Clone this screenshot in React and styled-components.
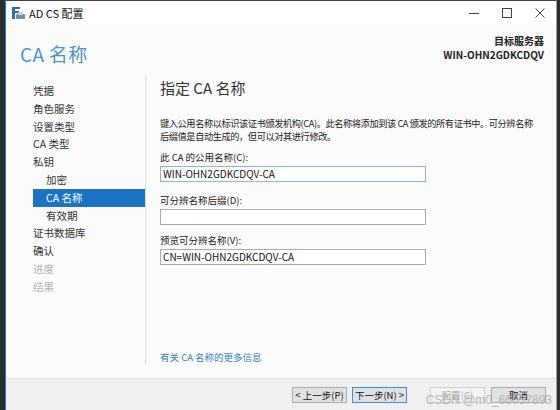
import React from "react";
import styled, { createGlobalStyle } from "styled-components";

const GlobalStyle = createGlobalStyle`
  html, body {
    margin: 0;
    padding: 0;
    background: #2d2d2d;
    font-family: "Noto Sans CJK SC", "Noto Sans", sans-serif;
  }
`;

const Screen = styled.div`
  width: 560px;
  height: 410px;
  display: flex;
  overflow: hidden;
  background: #2d2d2d;
`;

const LeftStrip = styled.div`
  width: 5px;
  flex: none;
  background: #2d2d2d;
`;

const Window = styled.div`
  width: 552px;
  height: 410px;
  display: flex;
  flex-direction: column;
  background: #fbfbfb;
  border-left: 1px solid #1a7ad4;
  border-right: 1px solid #a0a0a0;
  border-top: 1px solid #444;
  box-sizing: border-box;
`;

const TitleBar = styled.div`
  height: 24px;
  display: flex;
  align-items: center;
  background: #ffffff;
  padding-left: 6px;
  flex: none;
`;

const TitleText = styled.span`
  font-size: 11px;
  color: #111;
  margin-left: 4px;
`;

const Controls = styled.div`
  margin-left: auto;
  display: flex;
  height: 100%;
`;

const ControlBtn = styled.div`
  width: 33px;
  display: flex;
  align-items: center;
  justify-content: center;
  color: #333;
`;

const Header = styled.div`
  height: 50px;
  display: flex;
  align-items: flex-start;
  justify-content: space-between;
  padding: 0 12px 0 14px;
  flex: none;
`;

const PageTitle = styled.div`
  font-size: 19px;
  color: #4b95c4;
  margin-top: 15px;
  letter-spacing: 0.3px;
`;

const ServerBox = styled.div`
  text-align: right;
  margin-top: 9px;
  font-size: 10px;
  line-height: 14px;
  color: #222;
  font-weight: 700;
`;

const Body = styled.div`
  flex: 1;
  display: flex;
  min-height: 0;
`;

const Nav = styled.div`
  width: 140px;
  flex: none;
  padding: 7px 0 0 27px;
  box-sizing: border-box;
  border-right: 1px solid #dcdcdc;
  margin-bottom: 14px;
`;

const NavItem = styled.div`
  height: 17.8px;
  line-height: 17.8px;
  font-size: 10.5px;
  padding-left: ${(p) => (p.$sub ? "13px" : "0")};
  color: ${(p) => (p.$active ? "#ffffff" : p.$disabled ? "#b4b4b4" : "#333")};
  background: ${(p) => (p.$active ? "#1c73c4" : "transparent")};
  white-space: nowrap;
`;

const Content = styled.div`
  flex: 1;
  display: flex;
  flex-direction: column;
  padding: 0 0 0 14px;
  min-width: 0;
`;

const SectionTitle = styled.div`
  font-size: 15px;
  color: #333;
  line-height: 20px;
  margin-top: 3px;
`;

const Desc = styled.div`
  font-size: 9.2px;
  letter-spacing: -0.4px;
  line-height: 12.5px;
  color: #222;
  margin-top: 19px;
  white-space: nowrap;
`;

const Label = styled.div`
  font-size: 9.5px;
  color: #222;
  line-height: 12px;
  margin-top: ${(p) => p.$top || "12px"};
`;

const Input = styled.div`
  width: 266px;
  height: 16px;
  box-sizing: border-box;
  border: 1px solid ${(p) => (p.$focus ? "#8db4e2" : "#ababab")};
  background: #fff;
  font-size: 10px;
  line-height: 14px;
  padding-left: 2px;
  color: #111;
  margin-top: 3px;
`;

const MoreLink = styled.a`
  margin-top: auto;
  margin-bottom: 14px;
  font-size: 9.5px;
  color: #3a7fc6;
  text-decoration: none;
`;

const Footer = styled.div`
  height: 31px;
  flex: none;
  background: #f0f0f0;
  border-top: 1px solid #e0e0e0;
  display: flex;
  align-items: center;
  padding-left: 281px;
  position: relative;
`;

const Button = styled.div`
  width: 55px;
  height: 16px;
  box-sizing: border-box;
  border: 1px solid ${(p) => (p.$primary ? "#3d8ee0" : p.$disabled ? "#cfcfcf" : "#adadad")};
  background: ${(p) => (p.$disabled ? "#f4f4f4" : "#e1e1e1")};
  color: ${(p) => (p.$disabled ? "#a8a8a8" : "#111")};
  font-size: 9.5px;
  display: flex;
  align-items: center;
  justify-content: center;
  margin-left: ${(p) => p.$gap || "5px"};
  white-space: nowrap;
`;

const Watermark = styled.span`
  position: absolute;
  right: 4px;
  bottom: 3px;
  font-size: 12px;
  color: rgba(170, 170, 170, 0.85);
  font-family: "Liberation Sans", sans-serif;
`;

const AppIcon = () => (
  <svg width="13" height="12" viewBox="0 0 13 12">
    <rect x="0" y="0" width="3" height="12" fill="#2a6fba" />
    <rect x="3" y="0" width="5" height="2" fill="#2a6fba" />
    <rect x="3" y="4" width="4" height="2" fill="#2a6fba" />
    <rect x="4" y="7" width="9" height="5" rx="1" fill="#7a8ea3" />
    <rect x="6" y="5" width="5" height="3" rx="1" fill="#c7d2dc" />
  </svg>
);

const navItems = [
  { t: "凭据" },
  { t: "角色服务" },
  { t: "设置类型" },
  { t: "CA 类型" },
  { t: "私钥" },
  { t: "加密", sub: true },
  { t: "CA 名称", sub: true, active: true },
  { t: "有效期", sub: true },
  { t: "证书数据库" },
  { t: "确认" },
  { t: "进度", disabled: true },
  { t: "结果", disabled: true },
];

export default function App() {
  return (
    <Screen>
      <GlobalStyle />
      <LeftStrip />
      <Window>
        <TitleBar>
          <AppIcon />
          <TitleText>AD CS 配置</TitleText>
          <Controls>
            <ControlBtn>
              <svg width="10" height="10" viewBox="0 0 10 10">
                <path d="M0 5.5h10" stroke="#444" strokeWidth="1" />
              </svg>
            </ControlBtn>
            <ControlBtn>
              <svg width="10" height="10" viewBox="0 0 10 10">
                <rect x="0.5" y="0.5" width="9" height="9" fill="none" stroke="#444" />
              </svg>
            </ControlBtn>
            <ControlBtn>
              <svg width="10" height="10" viewBox="0 0 10 10">
                <path d="M0.5 0.5l9 9M9.5 0.5l-9 9" stroke="#444" strokeWidth="1" />
              </svg>
            </ControlBtn>
          </Controls>
        </TitleBar>
        <Header>
          <PageTitle>CA 名称</PageTitle>
          <ServerBox>
            <div>目标服务器</div>
            <div>WIN-OHN2GDKCDQV</div>
          </ServerBox>
        </Header>
        <Body>
          <Nav>
            {navItems.map((n) => (
              <NavItem key={n.t} $sub={n.sub} $active={n.active} $disabled={n.disabled}>
                {n.t}
              </NavItem>
            ))}
          </Nav>
          <Content>
            <SectionTitle>指定 CA 名称</SectionTitle>
            <Desc>
              键入公用名称以标识该证书颁发机构(CA)。此名称将添加到该 CA 颁发的所有证书中。可分辨名称
              <br />
              后缀值是自动生成的，但可以对其进行修改。
            </Desc>
            <Label $top="9px">此 CA 的公用名称(C):</Label>
            <Input $focus>WIN-OHN2GDKCDQV-CA</Input>
            <Label $top="12px">可分辨名称后缀(D):</Label>
            <Input />
            <Label $top="9px">预览可分辨名称(V):</Label>
            <Input>CN=WIN-OHN2GDKCDQV-CA</Input>
            <MoreLink href="#">有关 CA 名称的更多信息</MoreLink>
          </Content>
        </Body>
        <Footer>
          <Button>&lt; 上一步(P)</Button>
          <Button $primary>下一步(N) &gt;</Button>
          <Button $disabled $gap="23px">配置(C)</Button>
          <Button $gap="6px">取消</Button>
          <Watermark>CSDN @m0_66057893</Watermark>
        </Footer>
      </Window>
    </Screen>
  );
}
